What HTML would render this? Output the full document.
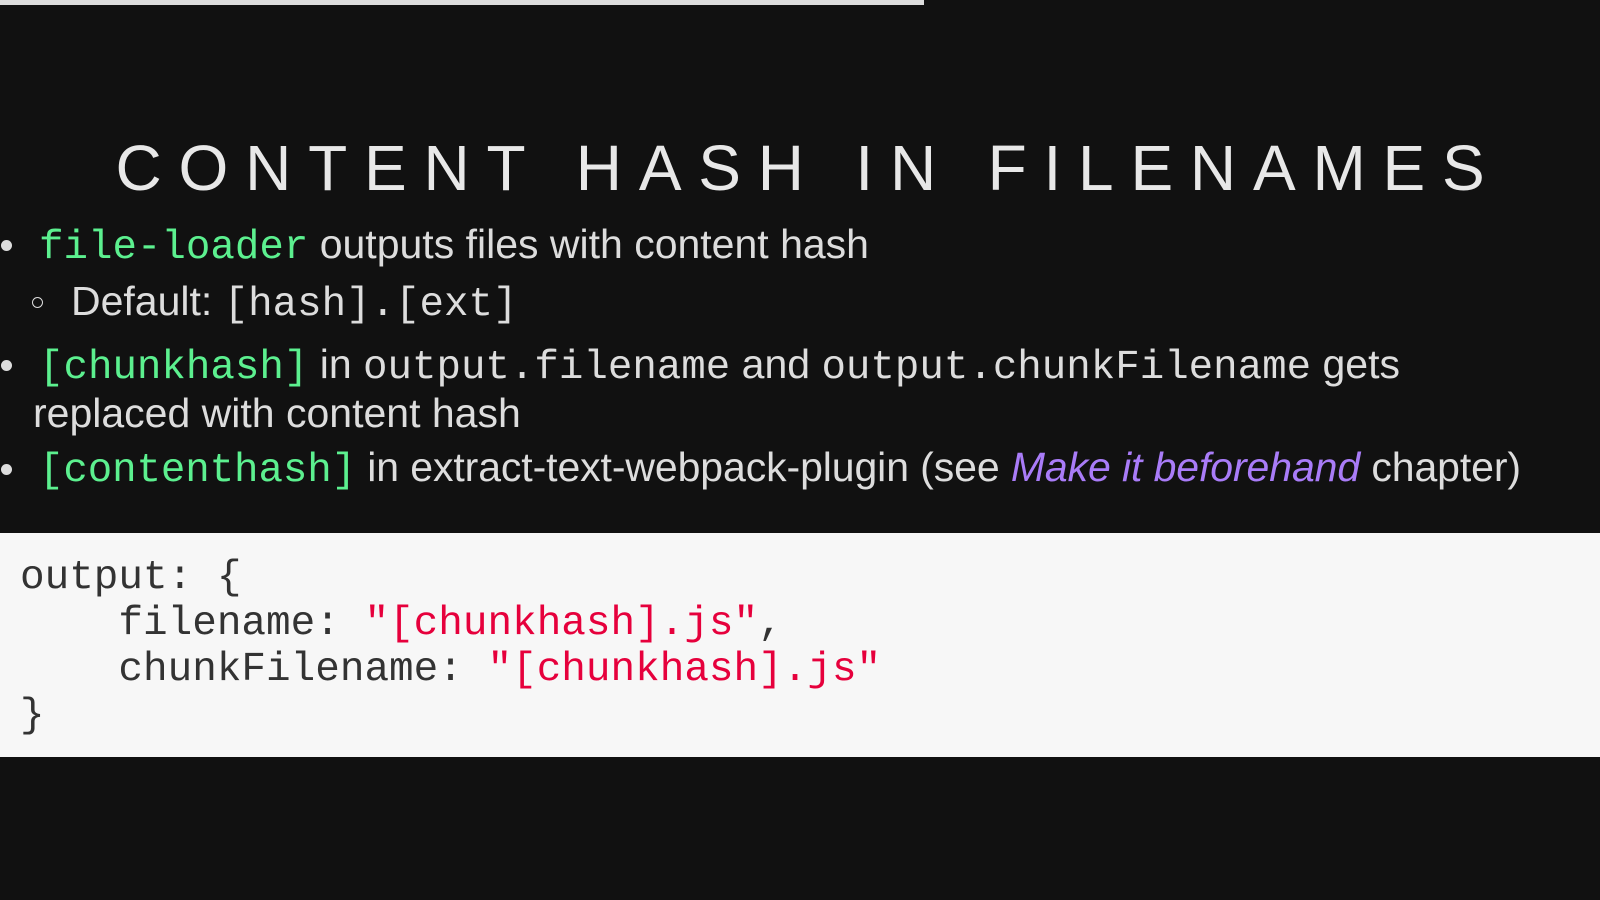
<!DOCTYPE html>
<html><head><style>
html,body{margin:0;padding:0;background:#111;width:1600px;height:900px;overflow:hidden}
body{font-family:"Liberation Sans",sans-serif;color:#ddd;position:relative}
.bar{position:absolute;left:0;top:0;width:924px;height:5px;background:#ddd}
h1{position:absolute;left:0;width:1600px;top:128px;margin:0;text-align:center;font-weight:normal;font-size:64px;letter-spacing:16.8px;line-height:80px;color:#e8e8e8;padding-left:17px;box-sizing:border-box}
.l{position:absolute;font-size:41px;white-space:nowrap;line-height:48px}
code{font-family:"Liberation Mono",monospace;font-size:40.8px}
.g{color:#5cf08f}
.m{margin-left:6px}
.dot{position:absolute;width:11px;height:11px;border-radius:50%;background:#ddd}
.circ{position:absolute;width:9px;height:9px;border-radius:50%;border:1.5px solid #ddd}
.p{color:#a97cf8;font-style:italic}
.code{position:absolute;left:0;top:533px;width:1600px;height:224px;background:#f7f7f7;font-family:"Liberation Mono",monospace;font-size:41px;line-height:46px;color:#333;white-space:pre;padding:22px 0 0 20px;box-sizing:border-box}
.s{color:#e6003c}
</style></head><body>
<div class="bar"></div>
<h1>CONTENT HASH IN FILENAMES</h1>
<div class="dot" style="left:1px;top:240px"></div>
<div class="l" style="left:39px;top:220px"><code class="g">file-loader</code> outputs files with content hash</div>
<div class="circ" style="left:32px;top:297px"></div>
<div class="l" style="left:71px;top:277px">Default: <code>[hash].[ext]</code></div>
<div class="dot" style="left:1px;top:360px"></div>
<div class="l" style="left:33px;top:340px"><code class="g m">[chunkhash]</code> in <code>output.filename</code> and <code>output.chunkFilename</code> gets</div>
<div class="l" style="left:33px;top:389px">replaced with content hash</div>
<div class="dot" style="left:1px;top:464px"></div>
<div class="l" style="left:33px;top:443px;letter-spacing:-0.1px"><code class="g m">[contenthash]</code> in extract-text-webpack-plugin (see <span class="p">Make it beforehand</span> chapter)</div>
<div class="code">output: {
    filename: <span class="s">"[chunkhash].js"</span>,
    chunkFilename: <span class="s">"[chunkhash].js"</span>
}</div>
</body></html>
